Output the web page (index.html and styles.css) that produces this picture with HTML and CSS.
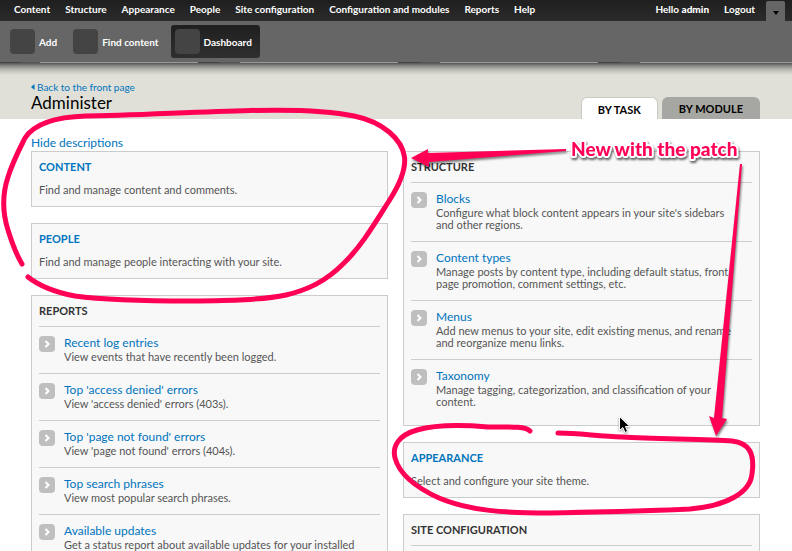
FILE: index.html
```
<!DOCTYPE html>
<html lang="en">
<head>
    <meta charset="UTF-8">
    <title>Administer</title>
    <link rel="stylesheet" href="styles.css">
</head>
<body>
    <div class="toolbar">
        <nav class="toolbar-menu">
            <ul class="menu">
                <li><a href="#">Content</a></li>
                <li><a href="#">Structure</a></li>
                <li><a href="#">Appearance</a></li>
                <li><a href="#">People</a></li>
                <li><a href="#">Site configuration</a></li>
                <li><a href="#">Configuration and modules</a></li>
                <li><a href="#">Reports</a></li>
                <li><a href="#">Help</a></li>
            </ul>
            <ul class="menu user">
                <li><a href="#">Hello <strong>admin</strong></a></li>
                <li><a href="#">Logout</a></li>
            </ul>
            <button class="toggle" type="button" aria-label="Hide shortcuts">
                <svg width="6" height="4" viewBox="0 0 6 4"><path d="M0 0h6L3 4z" fill="#000"/></svg>
            </button>
        </nav>
        <div class="shortcuts">
            <a href="#"><span class="icon"></span>Add</a>
            <a href="#"><span class="icon"></span>Find content</a>
            <a href="#" class="active"><span class="icon"></span>Dashboard</a>
        </div>
    </div>

    <header class="branding">
        <div class="heading">
            <a class="back" href="#"><svg width="4" height="6" viewBox="0 0 4 6"><path d="M3.500 0v6L0 3z" fill="#0074bd"/></svg>Back to the front page</a>
            <h1>Administer</h1>
        </div>
        <ul class="tabs">
            <li><a href="#" class="active">BY TASK</a></li>
            <li><a href="#">BY MODULE</a></li>
        </ul>
    </header>

    <!-- arrow used in front of each entry -->
    <svg class="defs" width="0" height="0">
        <symbol id="arrow" viewBox="0 0 16 16">
            <rect width="16" height="16" rx="4" fill="#bfbfbf"/>
            <path d="M6.500 5l3 3-3 3" fill="none" stroke="#fff" stroke-width="2"/>
        </symbol>
    </svg>

    <main class="page">
        <a class="compact" href="#">Hide descriptions</a>
        <div class="columns">
            <div class="column">
                <section class="panel">
                    <h3><a href="#">CONTENT</a></h3>
                    <p>Find and manage content and comments.</p>
                </section>
                <section class="panel">
                    <h3><a href="#">PEOPLE</a></h3>
                    <p>Find and manage people interacting with your site.</p>
                </section>
                <section class="panel">
                    <h3>REPORTS</h3>
                    <dl>
                        <div class="item">
                            <dt><svg><use href="#arrow"/></svg><a href="#">Recent log entries</a></dt>
                            <dd>View events that have recently been logged.</dd>
                        </div>
                        <div class="item">
                            <dt><svg><use href="#arrow"/></svg><a href="#">Top 'access denied' errors</a></dt>
                            <dd>View 'access denied' errors (403s).</dd>
                        </div>
                        <div class="item">
                            <dt><svg><use href="#arrow"/></svg><a href="#">Top 'page not found' errors</a></dt>
                            <dd>View 'page not found' errors (404s).</dd>
                        </div>
                        <div class="item">
                            <dt><svg><use href="#arrow"/></svg><a href="#">Top search phrases</a></dt>
                            <dd>View most popular search phrases.</dd>
                        </div>
                        <div class="item">
                            <dt><svg><use href="#arrow"/></svg><a href="#">Available updates</a></dt>
                            <dd>Get a status report about available updates for your installed</dd>
                        </div>
                    </dl>
                </section>
            </div>
            <div class="column">
                <section class="panel">
                    <h3>STRUCTURE</h3>
                    <dl>
                        <div class="item">
                            <dt><svg><use href="#arrow"/></svg><a href="#">Blocks</a></dt>
                            <dd>Configure what block content appears in your site's sidebars and other regions.</dd>
                        </div>
                        <div class="item">
                            <dt><svg><use href="#arrow"/></svg><a href="#">Content types</a></dt>
                            <dd>Manage posts by content type, including default status, front page promotion, comment settings, etc.</dd>
                        </div>
                        <div class="item">
                            <dt><svg><use href="#arrow"/></svg><a href="#">Menus</a></dt>
                            <dd>Add new menus to your site, edit existing menus, and rename and reorganize menu links.</dd>
                        </div>
                        <div class="item">
                            <dt><svg><use href="#arrow"/></svg><a href="#">Taxonomy</a></dt>
                            <dd>Manage tagging, categorization, and classification of your content.</dd>
                        </div>
                    </dl>
                </section>
                <section class="panel">
                    <h3><a href="#">APPEARANCE</a></h3>
                    <p>Select and configure your site theme.</p>
                </section>
                <section class="panel">
                    <h3>SITE CONFIGURATION</h3>
                    <dl>
                        <div class="item"></div>
                    </dl>
                </section>
            </div>
        </div>
    </main>

    <!-- hand drawn notes over the page -->
    <svg class="notes" width="792" height="551" viewBox="0 0 792 551">
        <g class="pen">
            <path d="M22 264C16 254 12 243 8 230C2 211 3 192 8 177C13 161 20 148 25 138C34 124 54 117 86 116C126 116 190 112 250 110.500C290 109.500 331 111 354 116C383 122 402 139 404.500 157C406 170 400 184 389 201C375 223 361 247 343 264C325 282 307 290 286 295C263 300 230 300.500 190 301C150 301 105 300 75 296C54 292 38 285 28 277"/>
            <path d="M530 431C525 426 508 427 488 427C465 425 438 424 417 430C399 435 392 446 395 458C399 473 415 487 439 498C470 511 505 513 550 513C600 512 650 511 690 509C726 506 750 493 752 474C755 453 749 443 732 441C710 439 660 439 622 437C597 436 578 433 558 433"/>
        </g>
        <g class="arrows">
            <path d="M566 149L428 153L428 149L411 158L429 167L429 162L566 151z"/>
            <path d="M740 164L742 164L722 418L727 419L716 436L709 416L714 418z"/>
        </g>
        <text class="label" x="571" y="156">New with the patch</text>
        <path class="cursor" d="M619.500 416.500v14l3.300-3 2.200 5 2.600-1.200-2.200-4.800h4.400z"/>
    </svg>
</body>
</html>
```
FILE: styles.css
```
*{
    box-sizing: border-box;
    margin: 0;
    padding: 0;
}
html{
    scrollbar-width: none;
}
body{
    position: relative;
    background: #fff;
    color: #333;
    font: 11px/12px Lato, "Open Sans", sans-serif;
}
ul{
    list-style: none;
}
a{
    color: #0074bd;
    text-decoration: none;
}

/* toolbar */
.toolbar{
    color: #fff;
    font-size: 10px;
    font-weight: 700;
}
.toolbar a{
    color: #fff;
}
.toolbar-menu{
    display: flex;
    height: 21px;
    padding: 0 7px 0 14px;
    background: linear-gradient(#1f1f1f, #2b2b2b);
    line-height: 18px;
    white-space: nowrap;
}
.menu{
    display: flex;
    gap: 15px;
}
.user{
    margin-left: auto;
}
.toggle{
    width: 19px;
    height: 20px;
    margin: 1px 0 0 11px;
    border: 0;
    border-radius: 2px 2px 0 0;
    background: #666;
    line-height: 18px;
}
.shortcuts{
    display: flex;
    gap: 4px;
    height: 42px;
    padding: 4px 6px;
    background: repeating-linear-gradient(90deg, #444 0 19px, #555 19px 40px, #999 40px 198px, #444 198px 200px) 0 41px / 100% 1px no-repeat #666;
}
.shortcuts a{
    display: flex;
    align-items: center;
    gap: 4px;
    height: 33px;
    padding: 0 8px 0 4px;
    border-radius: 3px;
}
.shortcuts .active{
    background: linear-gradient(#1f1f1f, #2f2f2f);
}
.icon{
    width: 25px;
    height: 25px;
    border-radius: 4px;
    background: #444;
}

/* page header */
.branding{
    display: flex;
    justify-content: space-between;
    align-items: flex-end;
    height: 56px;
    padding: 0 32px 0 31px;
    background: linear-gradient(#555, #8b8b87 3px, #bdbdb7 7px, #e0e0d8 12px);
}
.back{
    display: flex;
    align-items: center;
    gap: 2px;
    font-size: 10px;
}
h1{
    margin-bottom: 6px;
    color: #000;
    font-size: 17px;
    font-weight: 400;
    line-height: 20px;
}
.tabs{
    display: flex;
    gap: 4px;
}
.tabs a{
    display: block;
    height: 22px;
    padding: 0 17px;
    border-radius: 6px 6px 0 0;
    background: #a6a7a2;
    color: #000;
    font-size: 11px;
    font-weight: 700;
    line-height: 24px;
}
.tabs .active{
    border: 1px solid #c9cac4;
    border-bottom: 0;
    padding: 0 16px;
    background: #fff;
}

/* page content */
.page{
    padding: 16px 32px 0 31px;
}
.compact{
    display: block;
    font-size: 12px;
    line-height: 16px;
}
.columns{
    display: grid;
    grid-template-columns: 1fr 1fr;
    gap: 15px;
}
.column{
    display: flex;
    flex-direction: column;
    gap: 16px;
    min-width: 0;
}
.panel{
    padding: 0 7px 7px;
    border: 1px solid #ccc;
    background: #f8f8f8;
}
.panel h3{
    font-size: 11px;
    font-weight: 700;
    line-height: 30px;
}
.panel p{
    padding: 2px 0 3px;
    color: #555;
}
.item{
    min-height: 47px;
    padding: 8px 10px 10px 25px;
    border-top: 1px solid #ccc;
    color: #555;
}
.item dt{
    display: flex;
    font-size: 12px;
    line-height: 16px;
}
.item svg{
    width: 16px;
    height: 16px;
    margin: 1px 9px -1px -25px;
}
.defs{
    display: block;
}

/* notes */
.notes{
    position: absolute;
    top: 0;
    left: 0;
    pointer-events: none;
}
.pen{
    fill: none;
    stroke: #ff0055;
    stroke-width: 5px;
    stroke-linecap: round;
}
.arrows{
    fill: #ff0055;
    filter: drop-shadow(1px 2px 1px rgba(0,0,0,.5));
}
.label{
    fill: #ff0055;
    stroke: #fff;
    stroke-width: 4px;
    stroke-linejoin: round;
    paint-order: stroke;
    font: 900 19px Lato, sans-serif;
    filter: drop-shadow(1px 2px 1px rgba(0,0,0,.6));
}
.cursor{
    fill: #000;
    stroke: #fff;
    stroke-width: 1px;
    filter: drop-shadow(0 1px 1px rgba(0,0,0,.4));
}
```
